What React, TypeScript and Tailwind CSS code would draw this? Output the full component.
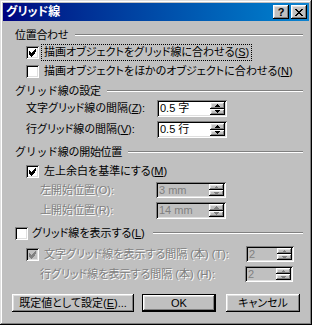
import React from "react";

const RAISED = "shadow-[inset_-1px_-1px_0_#000,inset_1px_1px_0_#fff,inset_-2px_-2px_0_#808080,inset_2px_2px_0_#dfdfdf]";
const SUNKEN = "shadow-[inset_1px_1px_0_#808080,inset_-1px_-1px_0_#fff,inset_2px_2px_0_#000,inset_-2px_-2px_0_#dfdfdf]";
const DIS = "text-[#808080] [text-shadow:1px_1px_0_#fff]";

function Check({ checked, disabled }: { checked?: boolean; disabled?: boolean }) {
  return (
    <div className={`w-[13px] h-[13px] shrink-0 ${SUNKEN} ${disabled ? "bg-[#c0c0c0]" : "bg-white"} flex items-center justify-center`}>
      {checked && (
        <svg width="13" height="13" viewBox="0 0 13 13">
          <path d="M3 5h1v1h1v1h1V6h1V5h1V4h1V3h1v3h-1v1H9v1H8v1H7v1H6v1H5v-1H4V9H3z" fill={disabled ? "#808080" : "#000"} />
        </svg>
      )}
    </div>
  );
}

function Heading({ label, mt }: { label: string; mt: string }) {
  return (
    <div className={`flex items-center h-[14px] pl-[12px] pr-[6px] ${mt}`}>
      <span className="whitespace-nowrap [font-feature-settings:normal] tracking-[-0.3px]">{label}</span>
      <div className="flex-1 ml-[6px] border-t border-t-[#808080] border-b border-b-white" />
    </div>
  );
}

function Spin({ value, disabled, w = "w-[70px]", h = "h-[17px]" }: { value: string; disabled?: boolean; w?: string; h?: string }) {
  return (
    <div className={`${w} ${h} ${SUNKEN} ${disabled ? "bg-[#c0c0c0]" : "bg-white"} p-[2px] flex`}>
      <div className={`flex-1 flex items-center pl-[1px] leading-none ${disabled ? "text-[#808080]" : ""}`}>{value}</div>
      <div className="w-[15px] flex flex-col">
        {[0, 1].map((i) => (
          <div key={i} className={`flex-1 bg-[#c0c0c0] ${RAISED} flex items-center justify-center`}>
            <svg width="5" height="3" viewBox="0 0 5 3">
              <path d={i === 0 ? "M2 0h1v1h1v1h1v1H0V2h1V1h1z" : "M0 0h5v1H4v1H3v1H2V2H1V1H0z"} fill={disabled ? "#808080" : "#000"} />
            </svg>
          </div>
        ))}
      </div>
    </div>
  );
}

function Btn({ children, w, def }: { children: React.ReactNode; w: string; def?: boolean }) {
  return (
    <div className={`${w} h-[18px] ${def ? "border border-black" : ""} flex`}>
      <div className={`flex-1 ${RAISED} flex items-center justify-center`}>{children}</div>
    </div>
  );
}

export default function App() {
  return (
    <div className="w-[312px] h-[325px] bg-[#c0c0c0] p-[3px] shadow-[inset_-1px_-1px_0_#000,inset_1px_1px_0_#dfdfdf,inset_-2px_-2px_0_#808080,inset_2px_2px_0_#fff] text-[11px] text-black leading-none [font-family:'Liberation_Sans','Noto_Sans_CJK_JP',sans-serif] [font-feature-settings:'palt'] overflow-hidden">
      <div className="h-[18px] bg-gradient-to-r from-[#000080] to-[#1084d0] flex items-center pl-[3px] pr-[2px]">
        <span className="text-white font-bold text-[12px] flex-1">グリッド線</span>
        <div className={`w-[16px] h-[14px] bg-[#c0c0c0] ${RAISED} flex items-center justify-center font-bold text-[11px]`}>?</div>
        <div className={`w-[16px] h-[14px] ml-[2px] bg-[#c0c0c0] ${RAISED} flex items-center justify-center`}>
          <svg width="8" height="7" viewBox="0 0 8 7">
            <path d="M0 0h2v1h1v1h2V1h1V0h2v1H7v1H6v1H5v1h1v1h1v1h1v1H6V6H5V5H3v1H2v1H0V6h1V5h1V4h1V3H2V2H1V1H0z" fill="#000" />
          </svg>
        </div>
      </div>

      <Heading label="位置合わせ" mt="mt-[7px]" />
      <div className="flex items-center h-[17px] mt-[2px] pl-[23px]">
        <Check checked />
        <span className="ml-[2px] h-[17px] px-[2px] flex items-center border border-dotted border-black">
          描画オブジェクトをグリッド線に合わせる(<u>S</u>)
        </span>
      </div>
      <div className="flex items-center h-[17px] mt-[2px] pl-[23px]">
        <Check />
        <span className="ml-[5px]">描画オブジェクトをほかのオブジェクトに合わせる(<u>N</u>)</span>
      </div>

      <Heading label="グリッド線の設定" mt="mt-[4px]" />
      <div className="flex items-center h-[17px] mt-[2px] pl-[23px]">
        <span className="w-[131px]">文字グリッド線の間隔(<u>Z</u>):</span>
        <Spin value="0.5 字" />
      </div>
      <div className="flex items-center h-[17px] mt-[4px] pl-[23px]">
        <span className="w-[131px]">行グリッド線の間隔(<u>V</u>):</span>
        <Spin value="0.5 行" />
      </div>

      <Heading label="グリッド線の開始位置" mt="mt-[7px]" />
      <div className="flex items-center h-[16px] mt-[4px] pl-[23px]">
        <Check checked />
        <span className="ml-[5px]">左上余白を基準にする(<u>M</u>)</span>
      </div>
      <div className="flex items-center h-[16px] mt-[3px] pl-[37px]">
        <span className={`w-[116px] ${DIS}`}>左開始位置(O):</span>
        <Spin value="3 mm" disabled h="h-[16px]" />
      </div>
      <div className="flex items-center h-[17px] mt-[4px] pl-[37px]">
        <span className={`w-[116px] ${DIS}`}>上開始位置(R):</span>
        <Spin value="14 mm" disabled />
      </div>

      <div className="flex items-center h-[16px] mt-[6px] pl-[12px] pr-[6px]">
        <Check />
        <span className="ml-[4px] whitespace-nowrap">グリッド線を表示する(<u>L</u>)</span>
        <div className="flex-1 ml-[8px] border-t border-t-[#808080] border-b border-b-white" />
      </div>
      <div className="flex items-center h-[16px] mt-[5px] pl-[23px]">
        <Check checked disabled />
        <span className={`ml-[5px] w-[202px] whitespace-nowrap ${DIS}`}>文字グリッド線を表示する間隔 (本) (T):</span>
        <Spin value="2" disabled w="w-[48px]" h="h-[16px]" />
      </div>
      <div className="flex items-center h-[16px] mt-[4px] pl-[37px]">
        <span className={`w-[205px] whitespace-nowrap ${DIS}`}>行グリッド線を表示する間隔 (本) (H):</span>
        <Spin value="2" disabled w="w-[48px]" h="h-[16px]" />
      </div>

      <div className="flex items-center h-[18px] mt-[12px] pl-[9px]">
        <Btn w="w-[122px]">既定値として設定(<u>E</u>)...</Btn>
        <div className="ml-[8px]">
          <Btn w="w-[74px]" def>OK</Btn>
        </div>
        <div className="ml-[10px]">
          <Btn w="w-[74px]">キャンセル</Btn>
        </div>
      </div>
    </div>
  );
}
